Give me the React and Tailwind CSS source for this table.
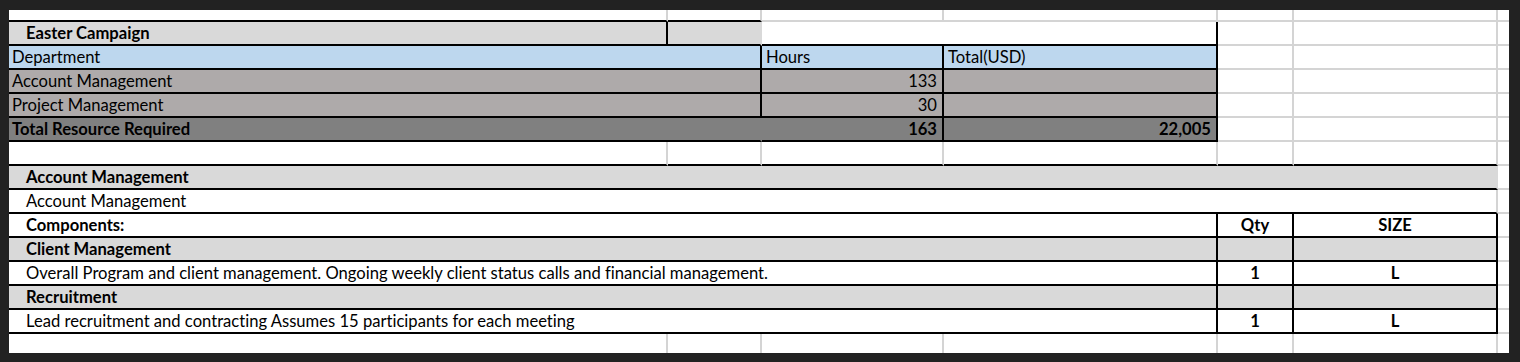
import React from "react";

const GR = "border-r-2 border-r-[#d4d4d4]";
const KR = "border-r-2 border-r-black";
const TR = "border-r-2 border-r-transparent";
const GB = "border-b-2 border-b-[#d4d4d4]";
const KB = "border-b-2 border-b-black";

function C({ className = "", children }) {
  return (
    <div className={"flex items-end overflow-hidden whitespace-nowrap " + className}>
      {children !== undefined ? <span className="leading-[1.2]">{children}</span> : null}
    </div>
  );
}

function Tail() {
  return (
    <>
      <C className={GR + " " + GB} />
      <C className={GR + " " + GB} />
      <C className={GB} />
    </>
  );
}

export default function App() {
  return (
    <div className="w-[1520px] h-[362px] bg-[#222222] pt-[10px] pl-[9px] overflow-hidden">
      <div className="w-[1500px] h-[343px] bg-white overflow-hidden font-['Lato','Liberation_Sans',sans-serif] text-[16.6px] [font-variant-ligatures:none] text-black grid grid-cols-[659px_94px_182px_274px_76px_204px_11px] grid-rows-[12px_repeat(13,24px)_19px]">
        {/* Row 1 */}
        <C className={GR + " " + KB} />
        <C className={GR + " " + KB} />
        <C className={GR + " " + GB} />
        <C className={GR + " " + GB} />
        <Tail />

        {/* Row 2 */}
        <C className={"bg-[#d9d9d9] pl-[17px] font-bold " + KR + " " + KB}>Easter Campaign</C>
        <C className={"bg-[#d9d9d9] " + TR + " " + KB} />
        <C className={"col-span-2 " + KR + " " + KB} />
        <Tail />

        {/* Row 3 */}
        <C className={"col-span-2 bg-[#bdd7ee] pl-[3px] " + KR + " " + KB}>Department</C>
        <C className={"bg-[#bdd7ee] pl-[4px] " + KR + " " + KB}>Hours</C>
        <C className={"bg-[#bdd7ee] pl-[4px] " + KR + " " + KB}>Total(USD)</C>
        <Tail />

        {/* Row 4 */}
        <C className={"col-span-2 bg-[#aeaaaa] pl-[3px] " + KR + " " + KB}>Account Management</C>
        <C className={"bg-[#aeaaaa] justify-end pr-[5px] " + KR + " " + KB}>133</C>
        <C className={"bg-[#aeaaaa] " + KR + " " + KB} />
        <Tail />

        {/* Row 5 */}
        <C className={"col-span-2 bg-[#aeaaaa] pl-[3px] " + KR + " " + KB}>Project Management</C>
        <C className={"bg-[#aeaaaa] justify-end pr-[5px] " + KR + " " + KB}>30</C>
        <C className={"bg-[#aeaaaa] " + KR + " " + KB} />
        <Tail />

        {/* Row 6 */}
        <C className={"col-span-2 bg-[#808080] pl-[3px] font-bold " + TR + " " + KB}>Total Resource Required</C>
        <C className={"bg-[#808080] justify-end pr-[5px] font-bold " + KR + " " + KB}>163</C>
        <C className={"bg-[#808080] justify-end pr-[5px] font-bold " + KR + " " + KB}>22,005</C>
        <Tail />

        {/* Row 7 */}
        <C className={GR + " " + KB} />
        <C className={GR + " " + KB} />
        <C className={GR + " " + KB} />
        <C className={GR + " " + KB} />
        <C className={GR + " " + KB} />
        <C className={GR + " " + KB} />
        <C className={GB} />

        {/* Row 8 */}
        <C className={"col-span-6 bg-[#d9d9d9] pl-[17px] font-bold " + TR + " " + KB}>Account Management</C>
        <C className={GB} />

        {/* Row 9 */}
        <C className={"col-span-6 pl-[17px] " + GR + " " + KB}>Account Management</C>
        <C className={GB} />

        {/* Row 10 */}
        <C className={"col-span-4 pl-[17px] font-bold " + KR + " " + KB}>Components:</C>
        <C className={"justify-center font-bold " + KR + " " + KB}>Qty</C>
        <C className={"justify-center font-bold " + KR + " " + KB}>SIZE</C>
        <C className={GB} />

        {/* Row 11 */}
        <C className={"col-span-4 bg-[#d9d9d9] pl-[17px] font-bold " + KR + " " + KB}>Client Management</C>
        <C className={"bg-[#d9d9d9] " + KR + " " + KB} />
        <C className={"bg-[#d9d9d9] " + KR + " " + KB} />
        <C className={GB} />

        {/* Row 12 */}
        <C className={"col-span-4 pl-[17px] " + KR + " " + KB}>
          Overall Program and client management. Ongoing weekly client status calls and financial management.
        </C>
        <C className={"justify-center font-bold " + KR + " " + KB}>1</C>
        <C className={"justify-center font-bold " + KR + " " + KB}>L</C>
        <C className={GB} />

        {/* Row 13 */}
        <C className={"col-span-4 bg-[#d9d9d9] pl-[17px] font-bold " + KR + " " + KB}>Recruitment</C>
        <C className={"bg-[#d9d9d9] " + KR + " " + KB} />
        <C className={"bg-[#d9d9d9] " + KR + " " + KB} />
        <C className={GB} />

        {/* Row 14 */}
        <C className={"col-span-4 pl-[17px] " + KR + " " + KB}>
          Lead recruitment and contracting Assumes 15 participants for each meeting
        </C>
        <C className={"justify-center font-bold " + KR + " " + KB}>1</C>
        <C className={"justify-center font-bold " + KR + " " + KB}>L</C>
        <C className={GB} />

        {/* Row 15 */}
        <C className={GR} />
        <C className={GR} />
        <C className={GR} />
        <C className={GR} />
        <C className={GR} />
        <C className={GR} />
        <C />
      </div>
    </div>
  );
}
